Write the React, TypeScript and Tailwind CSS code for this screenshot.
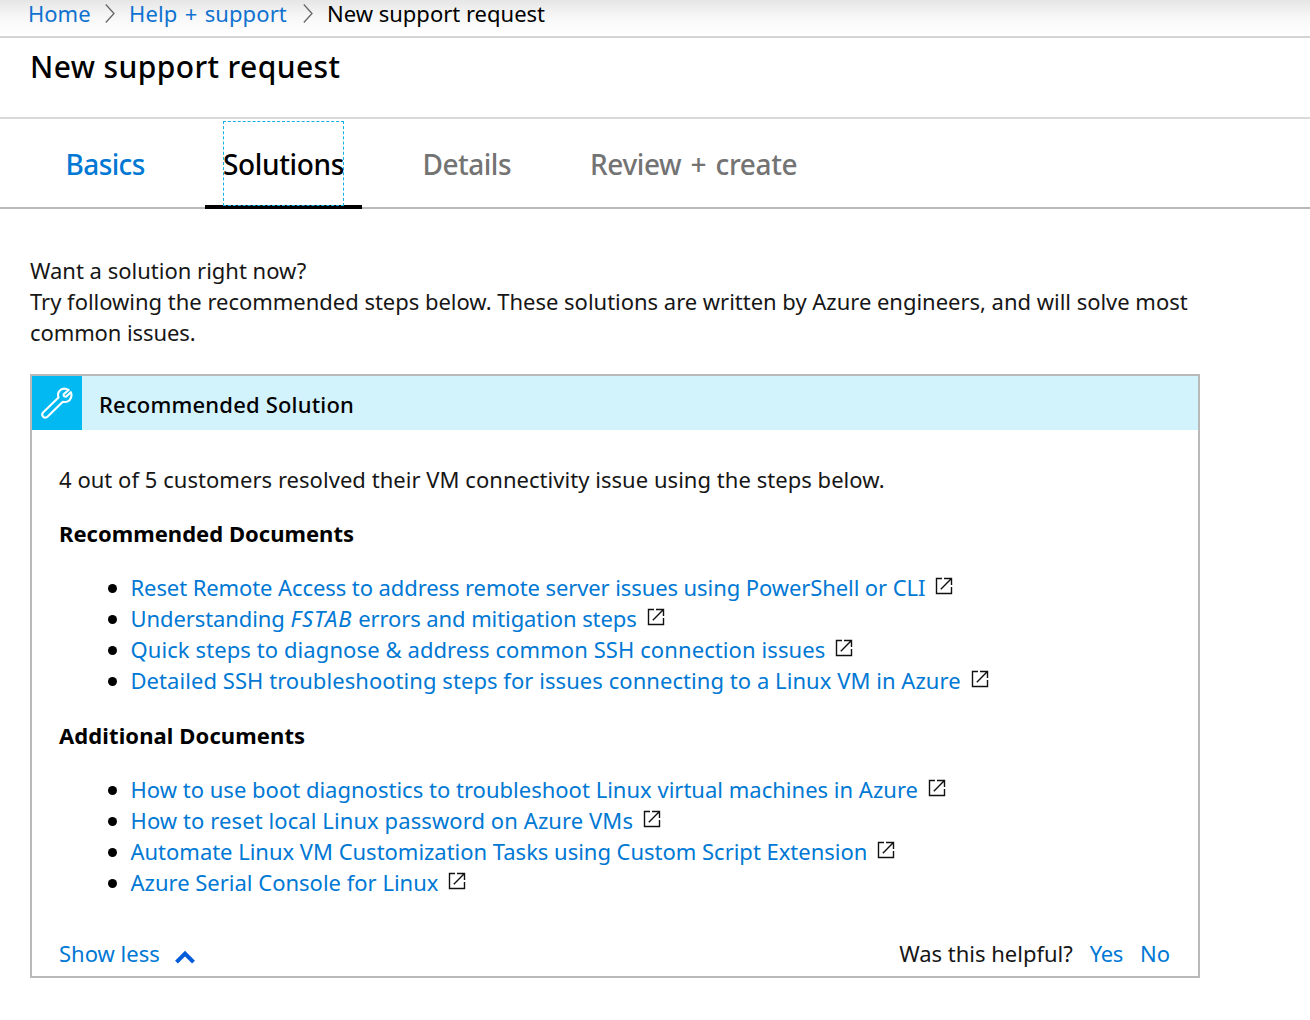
import type { ReactNode } from "react";

function Separator({ className }: { className: string }) {
  return (
    <svg viewBox="0 0 10 20" className={`h-5 w-[10px] shrink-0 ${className}`} fill="none" stroke="#666" strokeWidth="1.3">
      <path d="M0.8 1.5 9 10.5 0.8 19.5" />
    </svg>
  );
}

function ExternalIcon() {
  return (
    <svg viewBox="0 0 18 18" className="mt-[5px] h-[18px] w-[18px] shrink-0" fill="none" stroke="#111" strokeWidth="1.4">
      <path d="M7 1.5H1.5V16.5H16.5V10" />
      <path d="M9 1.5H16.5V8M16.2 1.8 5.8 12.2" />
    </svg>
  );
}

function WrenchIcon() {
  return (
    <svg viewBox="0 0 32 32" className="h-8 w-8" fill="none" stroke="#fff" strokeWidth="2.1" strokeLinejoin="round">
      <path d="M27.6 3C24.4 1.2 20.6 1.4 18.3 4.2 17 6 16.8 8.4 17.5 10.4L2.3 25.2C1 26.6 1 28.5 2.2 29.7 3.4 30.9 5.3 30.9 6.7 29.6L21.8 14.7C24.1 15.4 26.6 15 28.5 13.2 30.6 10.8 31 7.8 29.8 5.2L25.3 9.6 22.9 9.2 22.6 7.2Z" />
    </svg>
  );
}

function DocLink({ children, className }: { children: ReactNode; className: string }) {
  return (
    <li className="flex h-[31px] items-start">
      <span className="mt-[12px] mr-[14px] size-[8.5px] shrink-0 rounded-full bg-black" />
      <a className={`mr-[10px] whitespace-pre text-[#0078d4] ${className}`}>{children}</a>
      <ExternalIcon />
    </li>
  );
}

export default function App() {
  return (
    <div className="h-[1020px] w-[1310px] overflow-hidden bg-white font-['Noto_Sans',sans-serif] text-[22px] leading-[31px] whitespace-nowrap text-[#161616]">
      <nav className="flex h-[38px] items-start border-b-2 border-[#d4d4d4] bg-linear-to-b from-[#e6e6e6] via-[#f8f8f8] to-white pl-[28px] leading-[27px]">
        <a className="w-[77px] text-[#0f72d0]">Home</a>
        <Separator className="mt-[3px]" />
        <a className="ml-[14px] w-[158px] tracking-[0.1px] [word-spacing:1.5px] text-[#0f72d0]">Help + support</a>
        <Separator className="mt-[3px] ml-[16px]" />
        <span className="ml-[14px] text-black">New support request</span>
      </nav>

      <header className="h-[81px] border-b-2 border-[#d9d9d9] pt-[9px] pl-[30px]">
        <h1 className="text-[30px] leading-[40px] font-medium tracking-[0.4px] text-black">New support request</h1>
      </header>

      <div className="flex h-[90px] border-b-2 border-[#b9b9b9] pl-[47px] text-[28px] leading-[90px] font-medium">
        <div className="w-[158px] pl-[18.5px] tracking-[-0.6px] text-[#0078d4]">Basics</div>
        <div className="h-[90px] w-[157px] border-b-4 border-black px-[18px] pt-[2px]">
          <div className="h-[85px] w-[121px] border border-dashed border-[#12afe3] leading-[84px] tracking-[-0.35px] text-black">
            <span className="-ml-px">Solutions</span>
          </div>
        </div>
        <div className="ml-[60.5px] w-[167.5px] tracking-[-0.5px] text-[#737373]">Details</div>
        <div className="tracking-[-0.4px] [word-spacing:2.5px] text-[#737373]">Review + create</div>
      </div>

      <main className="pt-[46px] pl-[30px]">
        <p>
          Want a solution right now?
          <br />
          <span className="tracking-[-0.02px]">
            Try following the recommended steps below. These solutions are written by Azure engineers, and will solve most
          </span>
          <br />
          <span className="tracking-[-0.1px]">common issues.</span>
        </p>

        <section className="mt-[26px] h-[604px] w-[1170px] border-2 border-[#b9b9b9]">
          <div className="flex h-[54px] bg-[#d2f2fc]">
            <div className="flex w-[50px] items-center justify-center bg-[#03b9f2]">
              <WrenchIcon />
            </div>
            <h2 className="pt-[13px] pl-[17px] font-medium tracking-[0.18px] text-black">Recommended Solution</h2>
          </div>
          <div className="pt-[34px] pr-[28px] pl-[27px]">
            <p className="tracking-[0.04px]">4 out of 5 customers resolved their VM connectivity issue using the steps below.</p>
            <h3 className="mt-[23px] font-bold tracking-[0.02px] text-black">Recommended Documents</h3>
            <ul className="mt-[23px] pl-[49px]">
              <DocLink className="tracking-[-0.09px]">Reset Remote Access to address remote server issues using PowerShell or CLI</DocLink>
              <DocLink className="tracking-[-0.09px]">
                Understanding <em className="tracking-[1px]">FSTAB</em> errors and mitigation steps
              </DocLink>
              <DocLink className="tracking-[0.09px]">{"Quick steps to diagnose & address common SSH connection issues"}</DocLink>
              <DocLink className="tracking-[0.055px]">Detailed SSH troubleshooting steps for issues connecting to a Linux VM in Azure</DocLink>
            </ul>
            <h3 className="mt-[24px] font-bold tracking-[0.1px] text-black">Additional Documents</h3>
            <ul className="mt-[23px] pl-[49px]">
              <DocLink className="tracking-[0.01px]">How to use boot diagnostics to troubleshoot Linux virtual machines in Azure</DocLink>
              <DocLink className="tracking-[0.09px]">How to reset local Linux password on Azure VMs</DocLink>
              <DocLink className="tracking-[-0.02px]">Automate Linux VM Customization Tasks using Custom Script Extension</DocLink>
              <DocLink className="tracking-[0px]">Azure Serial Console for Linux</DocLink>
            </ul>
            <footer className="mt-[40px] flex">
              <a className="text-[#0078d4]">Show less</a>
              <svg viewBox="0 0 20 14" className="mt-[12px] ml-[15px] h-[14px] w-5" fill="none" stroke="#015cda" strokeWidth="4">
                <path d="M1.5 12.2 10 3.5 18.5 12.2" />
              </svg>
              <span className="ml-auto">Was this helpful?</span>
              <a className="ml-[17px] tracking-[-0.4px] text-[#0078d4]">Yes</a>
              <a className="ml-[17px] text-[#0078d4]">No</a>
            </footer>
          </div>
        </section>
      </main>
    </div>
  );
}
